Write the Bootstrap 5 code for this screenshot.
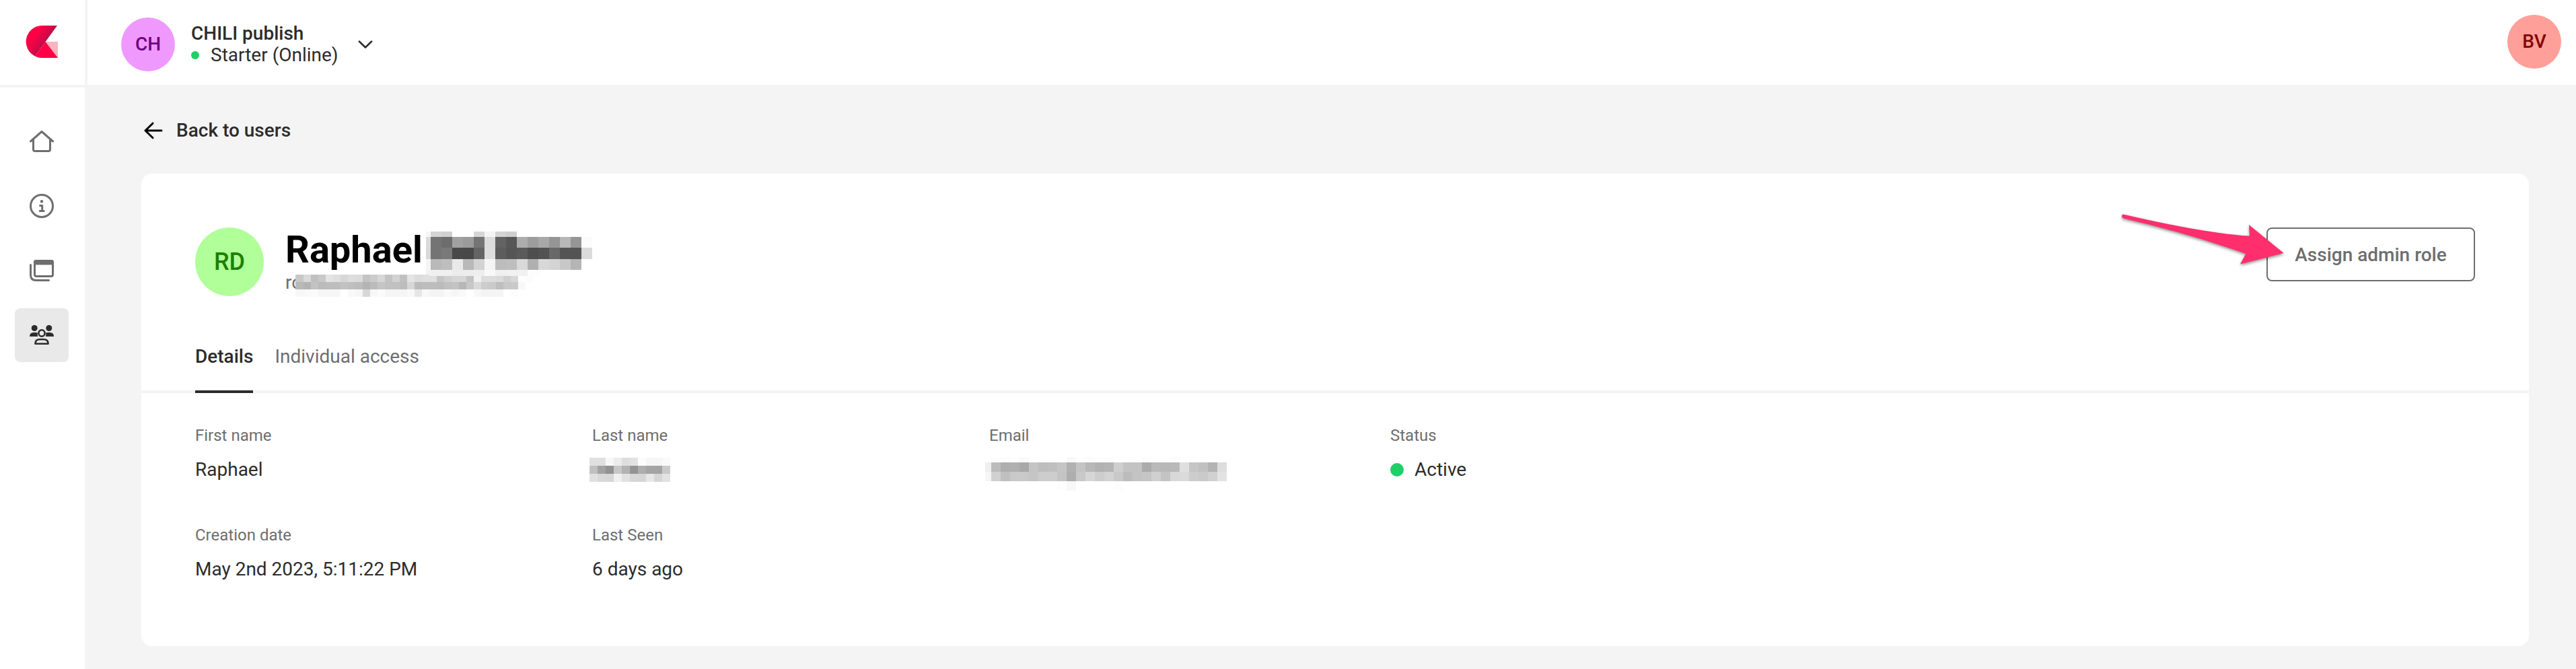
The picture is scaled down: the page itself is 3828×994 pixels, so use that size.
<!DOCTYPE html>
<html lang="en">
<head>
<meta charset="utf-8">
<title>CHILI publish - User details</title>
<meta name="viewport" content="width=device-width, initial-scale=1">
<link href="https://cdn.jsdelivr.net/npm/bootstrap@5.3.0/dist/css/bootstrap.min.css" rel="stylesheet">
<style>
  body { font-family: Roboto, "Liberation Sans", sans-serif; font-size: 28px; line-height: 32px; color: #2c2c2c; background: #f4f4f4; overflow: hidden; }
  svg { display: block; flex: none; }
  .fw-med { font-weight: 500; }
  .shell { height: 994px; }
  .rail { width: 126px; }
  .logo-box { height: 130px; border-bottom: 4px solid #f4f4f4; padding: 38px 0 0 38px; }
  .rail-nav { padding: 40px 22px 0; gap: 16px; }
  .rail-nav .nav-link { width: 80px; height: 80px; padding: 0; border-radius: 8px; color: #6e6e6e; display: flex; align-items: center; justify-content: center; }
  .rail-nav .nav-link.active { background: #e9e9e9; color: #2c2c2c; }
  .topbar { height: 126px; padding: 0 22px 0 50px; margin-left: 4px; }
  .avatar { width: 80px; height: 80px; border-radius: 50%; flex: none; display: flex; align-items: center; justify-content: center; font-weight: 500; }
  .av-ch { background: #ef99ff; color: #6e0080; margin-top: 6px; }
  .av-bv { background: #ff9f99; color: #800600; margin-bottom: 2px; }
  .av-rd { background: #b0ff99; color: #1d8000; width: 102px; height: 102px; font-size: 36px; }
  .workspace { margin-left: 24px; margin-top: 5px; }
  .chevron { margin: 5px auto 0 29px; }
  .env-dot { width: 12px; height: 12px; margin-right: 17px; }
  .dot { border-radius: 50%; background: #1fcf67; flex: none; }
  .backlink { margin: 52px 0 0 88px; color: #2c2c2c; height: 32px; }
  .backlink svg { margin-right: 20px; }
  .panel { margin: 48px 70px 0 84px; height: 702px; border: 0; border-radius: 16px; background: #fff; }
  .panel-head { padding: 80px 80px 0; height: 182px; }
  .person { margin-left: 32px; }
  .person h1 { font-size: 56px; line-height: 66px; font-weight: 700; color: #000; margin: 0; }
  .mail { height: 34px; color: #6e6e6e; }
  .btn-role { width: 310px; height: 80px; border: 2px solid #6e6e6e; border-radius: 8px; color: #6e6e6e; background: #fff; font-size: 28px; font-weight: 500; padding: 1px 0 0; line-height: 76px; }
  .pointer { position: absolute; left: -220px; top: -24px; filter: drop-shadow(0 2px 2px rgba(0,0,0,.45)); }
  .tabs { padding: 74px 80px 0; gap: 32px; height: 144px; border-bottom: 4px solid #f4f4f4; }
  .tabs .nav-link { padding: 0; color: #6e6e6e; height: 70px; line-height: 32px; border-bottom: 4px solid transparent; border-radius: 0; }
  .tabs .nav-link.active { color: #2c2c2c; font-weight: 500; border-color: #2c2c2c; }
  .facts { display: grid; grid-template-columns: 590px 590px 596px 1fr; grid-auto-rows: 148px; padding: 47px 80px 0; margin: 0; }
  .facts dt { font-size: 24px; line-height: 32px; font-weight: 400; color: #6e6e6e; margin-bottom: 19px; }
  .facts dd { margin: 0; height: 32px; }
  .st-dot { width: 20px; height: 20px; margin-right: 16px; }
  #m-name { margin-left: 5px; margin-top: 6px; overflow: visible; }
  #m-mail { overflow: visible; margin: 4px 0 0 -10px; }
  #m-last { margin: -2px 0 0 -4px; }
  #m-email { margin: -3px 0 0 -6px; }
</style>
</head>
<body>
<div class="shell d-flex">
  <aside class="rail bg-white flex-shrink-0">
    <div class="logo-box">
      <svg width="48" height="48" viewBox="0 0 48 48">
        <defs><linearGradient id="lg" x1="8" y1="12" x2="32" y2="28" gradientUnits="userSpaceOnUse"><stop offset=".25" stop-color="#ff0046"/><stop offset="1" stop-color="#b0104a"/></linearGradient></defs>
        <path d="M29 24H48V48z" fill="#f9b4c0"/>
        <path d="M29.500 24 48 48H24Q19 48 14 45.500z" fill="#ff0046"/>
        <path d="M47 0H24A24 24 0 0 0 14 45.500z" fill="url(#lg)"/>
      </svg>
    </div>
    <nav class="nav rail-nav d-flex flex-column">
      <a class="nav-link" href="#" aria-label="Home"><svg width="36" height="36" viewBox="0 0 36 36" fill="none" stroke="currentColor" stroke-width="3" stroke-linecap="round" stroke-linejoin="round"><path d="M1.500 18 18 3.500 34.500 18M5.500 15V30Q5.500 32.500 8 32.500H28Q30.500 32.500 30.500 30V15"/></svg></a>
      <a class="nav-link" href="#" aria-label="Info"><svg width="36" height="36" viewBox="0 0 36 36" fill="none" stroke="currentColor" stroke-width="3" stroke-linecap="round" stroke-linejoin="round"><circle cx="18" cy="18" r="16.500"/><circle cx="18" cy="11.300" r="2.200" fill="currentColor" stroke="none"/><path d="M15.500 17.500H18.700V25.500M15.200 25.500H21.200"/></svg></a>
      <a class="nav-link" href="#" aria-label="Environments"><svg width="36" height="36" viewBox="0 0 36 36" fill="none" stroke="currentColor" stroke-width="3" stroke-linecap="round" stroke-linejoin="round"><rect x="7.500" y="3.500" width="27" height="23" rx="2.500"/><path d="M7.500 8V5.500Q7.500 3.500 9.500 3.500H32.500Q34.500 3.500 34.500 5.500V8z" fill="currentColor"/><path d="M1.500 9.500V24.500Q1.500 32.500 9.500 32.500H28.500"/></svg></a>
      <a class="nav-link active" href="#" aria-label="Users"><svg width="36" height="36" viewBox="0 0 36 36" fill="currentColor"><circle cx="7.200" cy="7.500" r="4.500"/><circle cx="28.800" cy="7.500" r="4.500"/><path d="M0 20Q0 14 6 14H9Q11 14 12 14.800Q11 17.500 12.200 20zM36 20Q36 14 30 14H27Q25 14 24 14.800Q25 17.500 23.800 20z"/><g fill="none" stroke="currentColor" stroke-width="2.600" stroke-linejoin="round"><ellipse cx="18" cy="15" rx="4.600" ry="4.800"/><path d="M8.500 30.700Q8.500 24.300 15 24.300H21Q27.500 24.300 27.500 30.700z"/></g></svg></a>
    </nav>
  </aside>

  <div class="flex-grow-1">
    <header class="topbar bg-white d-flex align-items-center">
      <div class="avatar av-ch">CH</div>
      <div class="workspace">
        <div class="fw-med">CHILI publish</div>
        <div class="d-flex align-items-center"><span class="dot env-dot"></span>Starter (Online)</div>
      </div>
      <svg class="chevron" width="22" height="14" viewBox="0 0 22 14" fill="none" stroke="#2c2c2c" stroke-width="2.500" stroke-linecap="round" stroke-linejoin="round"><path d="M1.800 2.500 11 11.500 20.200 2.500"/></svg>
      <div class="avatar av-bv">BV</div>
    </header>

    <main>
      <a class="backlink d-flex align-items-center text-decoration-none fw-med" href="#">
        <svg width="28" height="26" viewBox="0 0 28 26" fill="none" stroke="#000" stroke-width="3" stroke-linecap="round" stroke-linejoin="round"><path d="M13 2.200 2 13 13 23.800M2 13H26"/></svg>Back to users
      </a>

      <section class="card panel">
        <div class="panel-head d-flex">
          <div class="avatar av-rd">RD</div>
          <div class="person">
            <div class="d-flex"><h1>Raphael</h1><svg id="m-name" width="250" height="60"></svg></div>
            <div class="mail d-flex"><span>ro</span><svg id="m-mail" width="360" height="36"></svg></div>
          </div>
          <div class="ms-auto position-relative">
            <button class="btn btn-role" type="button">Assign admin role</button>
            <svg class="pointer" width="250" height="90" viewBox="0 0 250 90"><path d="M7.500 4.500Q5 4.500 5 7Q5 9.500 7 10.300Q105 33 189.500 63L181 78.500L245.500 62L194 20L195 36.500Q130 33 7.500 4.500z" fill="#ff2e6c"/></svg>
          </div>
        </div>
        <nav class="nav tabs">
          <a class="nav-link active" href="#">Details</a>
          <a class="nav-link" href="#">Individual access</a>
        </nav>
        <dl class="facts">
          <div><dt>First name</dt><dd>Raphael</dd></div>
          <div><dt>Last name</dt><dd><svg id="m-last" width="130" height="38"></svg></dd></div>
          <div><dt>Email</dt><dd><svg id="m-email" width="370" height="52"></svg></dd></div>
          <div><dt>Status</dt><dd class="d-flex align-items-center"><span class="dot st-dot"></span>Active</dd></div>
          <div><dt>Creation date</dt><dd>May 2nd 2023, 5:11:22 PM</dd></div>
          <div><dt>Last Seen</dt><dd>6 days ago</dd></div>
        </dl>
      </section>
    </main>
  </div>
</div>
<script src="https://cdn.jsdelivr.net/npm/bootstrap@5.3.0/dist/js/bootstrap.bundle.min.js"></script>
<script>
  // Redaction mosaics: each row is a string of two-digit grey levels.
  function mosaic(id, edges, rows) {
    var out = '';
    rows.forEach(function (r) {
      for (var i = 0; i * 2 < r[2].length; i++) {
        var g = r[2].substr(i * 2, 2);
        if (g !== 'ff') out += '<rect shape-rendering="crispEdges" x="' + edges[i] + '" y="' + r[0] + '" width="' + (edges[i + 1] - edges[i]) + '" height="' + r[1] + '" fill="#' + g + g + g + '"/>';
      }
    });
    document.getElementById(id).innerHTML = out;
  }
  function steps(first, start, size, n) {
    var e = first === null ? [] : [first];
    for (var i = 0; i <= n; i++) e.push(start + i * size);
    return e;
  }
  mosaic('m-name', steps(0, 7, 16, 15), [
    [0, 8, 'f6d4d0ffffd6f5d4cf'],
    [8, 16, 'da746da19b74dc6357ad9da895b796fb'],
    [24, 17, 'd87479494864dd5d555a4e52685454da'],
    [41, 16, 'f5b9bee9b9d3f5bcbed9b0d8d4c8b5ff'],
    [57, 9, 'f3f0f0ecedeef9eff1f1fd']
  ]);
  mosaic('m-mail', steps(0, 12, 11, 31), [
    [0, 11, 'c8d9c0c9e4dfd7dedcc3ccd7c3d2c0e4dde0'],
    [11, 11, 'b9b3c3bbbdbdc2bfbcb4bcc5c1c1bdd7bbbdbdbbc1c3b7c8dacdcabec8caf8'],
    [22, 11, 'f7f9fbf6f6f6fff9f6d7f7fbf5f5f5f8e6f8f4f4faf6f9fff7f4f4f4fffc'],
    [2, 9, 'ffffffffffffffffffffffffffffffffffffe0c5cfd6d6c3f1dddddacfd8fdfc']
  ]);
  mosaic('m-last', steps(null, 0, 12, 10), [
    [0, 12, 'e0e0f8ecdee2fcf6f6fa'],
    [12, 12, 'c0a292c7b294aea4a4ca'],
    [24, 12, 'e1d9d7f0e2d7d6e7d6e3']
  ]);
  mosaic('m-email', steps(0, 9, 14, 25), [
    [0, 8, 'fffcfcfdfafffffffff9fefcfdfcfffffefcfefefc'],
    [8, 14, 'efbcaeb0a9c4bdbfc5b1c4b8b2b5cfc3c3abb9b8b9e0c6c1b3dd'],
    [22, 14, 'f5d0c0c9c9c5cdcdc4aec9d6cdd3c9bcc4c5d0c4d8dacdcad1e3'],
    [36, 14, 'fffffffffffffffffdf8fffffffffd']
  ]);
</script>
</body>
</html>
